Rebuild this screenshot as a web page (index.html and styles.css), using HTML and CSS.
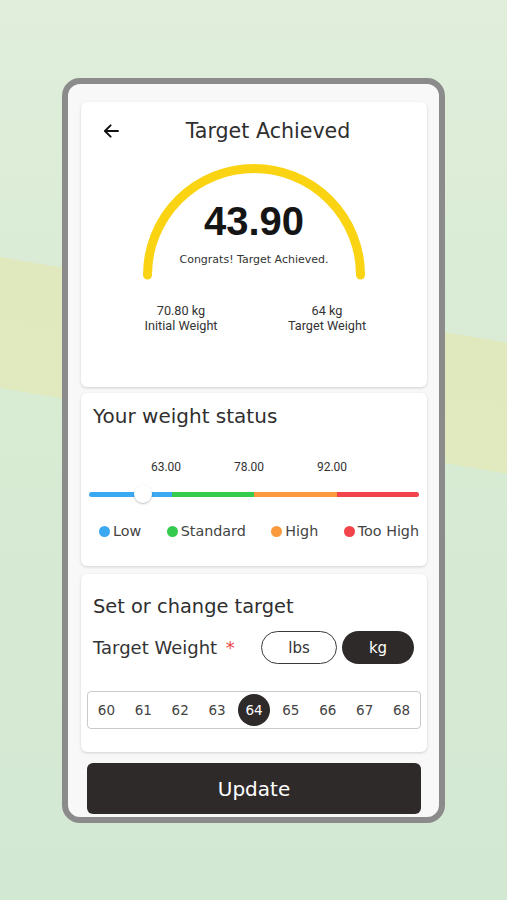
FILE: index.html
```html
<!DOCTYPE html>
<html lang="en">
<head>
<meta charset="utf-8">
<title>Target Achieved</title>
<link rel="stylesheet" href="styles.css">
</head>
<body>
<div class="page">
  <div class="phone">
    <section class="card card-summary">
      <header class="head">
        <span class="back">
          <svg width="16" height="14" viewBox="0 0 16 14" aria-hidden="true">
            <path d="M15 7H2.2M7.6 1.3L1.9 7l5.7 5.7" fill="none" stroke="#111" stroke-width="1.9" stroke-linecap="round" stroke-linejoin="round"/>
          </svg>
        </span>
        <h1 class="title">Target Achieved</h1>
      </header>
      <div class="gauge">
        <svg class="gauge-arc" width="230" height="122" viewBox="0 0 230 122" aria-hidden="true">
          <path d="M8.5 115 A106.5 106.5 0 0 1 221.5 115" fill="none" stroke="#fad312" stroke-width="9" stroke-linecap="round"/>
        </svg>
        <div class="gauge-text">
          <div class="value">43.90</div>
          <div class="congrats">Congrats! Target Achieved.</div>
        </div>
      </div>
      <div class="stats">
        <div class="stat"><div>70.80 kg</div><div>Initial Weight</div></div>
        <div class="stat"><div>64 kg</div><div>Target Weight</div></div>
      </div>
    </section>

    <section class="card card-status">
      <h2 class="section-title">Your weight status</h2>
      <div class="marks">
        <span>63.00</span><span>78.00</span><span>92.00</span>
      </div>
      <div class="slider">
        <div class="bar">
          <span class="seg seg-low"></span><span class="seg seg-std"></span><span class="seg seg-high"></span><span class="seg seg-top"></span>
        </div>
        <span class="thumb"></span>
      </div>
      <ul class="legend">
        <li><i class="dot dot-low"></i>Low</li>
        <li><i class="dot dot-std"></i>Standard</li>
        <li><i class="dot dot-high"></i>High</li>
        <li><i class="dot dot-top"></i>Too High</li>
      </ul>
    </section>

    <section class="card card-target">
      <h2 class="section-title title-target">Set or change target</h2>
      <div class="unit-row">
        <span class="field-label">Target Weight <b class="req">*</b></span>
        <div class="units">
          <span class="pill">lbs</span>
          <span class="pill pill-on">kg</span>
        </div>
      </div>
      <div class="picker">
        <span>60</span><span>61</span><span>62</span><span>63</span><span class="sel"><em>64</em></span><span>65</span><span>66</span><span>67</span><span>68</span>
      </div>
    </section>

    <button class="update">Update</button>
  </div>
</div>
</body>
</html>
```
FILE: styles.css
```css
* { box-sizing: border-box; }
html, body { margin: 0; padding: 0; }
body {
  width: 507px;
  height: 900px;
  overflow: hidden;
  font-family: "DejaVu Sans", "Noto Sans", sans-serif;
  color: #2e2e2e;
}
.page {
  width: 507px;
  height: 900px;
  padding: 78px 0 0 62px;
  background:
    linear-gradient(189.6deg, rgba(0,0,0,0) 0, rgba(0,0,0,0) 338px, #dfe9bd 338px, #e1eabe 467px, rgba(0,0,0,0) 467px),
    linear-gradient(180deg, #e0eedb 0%, #d8ebd3 45%, #d3e8d3 100%);
}
.phone {
  width: 383px;
  height: 745px;
  border: 6px solid #8b8b8b;
  border-radius: 18px;
  background: #f8f8f8;
  padding: 18px 12px 0 13px;
  display: flex;
  flex-direction: column;
}
.card {
  background: #fff;
  border-radius: 6px;
  box-shadow: 0 1px 3px rgba(0,0,0,0.16);
}
.card-summary {
  height: 285px;
  padding-top: 14px;
  display: flex;
  flex-direction: column;
  align-items: stretch;
}
.head {
  display: flex;
  align-items: center;
  height: 30px;
  padding: 0 10px 0 22px;
}
.back { width: 16px; height: 14px; display: flex; }
.title {
  flex: 1;
  margin: 0;
  text-align: center;
  font-weight: normal;
  font-size: 20.6px;
  line-height: 30px;
  color: #2f2f2f;
}
.gauge {
  margin-top: 14px;
  display: grid;
  justify-items: center;
}
.gauge-arc, .gauge-text { grid-area: 1 / 1; }
.gauge-text {
  width: 230px;
  height: 122px;
  display: flex;
  flex-direction: column;
  align-items: center;
  padding-top: 39px;
}
.value {
  font-family: "Liberation Sans", Arial, sans-serif;
  font-weight: bold;
  font-size: 40px;
  line-height: 44px;
  color: #151515;
}
.congrats {
  margin-top: 10px;
  font-size: 11px;
  line-height: 14px;
  color: #333;
}
.stats {
  margin-top: 21px;
  display: flex;
  justify-content: center;
  gap: 26px;
  padding-left: 0;
}
.stat {
  width: 120px;
  text-align: center;
  font-family: Roboto, "Liberation Sans", sans-serif;
  font-size: 12.7px;
  line-height: 15px;
  color: #333;
}
.card-status {
  margin-top: 6px;
  height: 173px;
  padding: 10px 8px 0 8px;
}
.section-title {
  margin: 0;
  padding-left: 4px;
  font-weight: normal;
  font-size: 20px;
  line-height: 26px;
  color: #2f2f2f;
}
.marks {
  margin-top: 31px;
  display: flex;
  gap: 43px;
  padding-left: 57px;
  font-family: Roboto, "Liberation Sans", sans-serif;
  font-size: 12px;
  line-height: 14px;
  color: #333;
}
.marks span { width: 40px; text-align: center; }
.slider {
  position: relative;
  margin-top: 10px;
  height: 20px;
  display: flex;
  align-items: center;
}
.bar {
  width: 330px;
  height: 5px;
  display: flex;
  border-radius: 3px;
  overflow: hidden;
}
.seg { flex: 1; }
.seg-low { background: #3aa9f2; }
.seg-std { background: #35cb4e; }
.seg-high { background: #fa9a3c; }
.seg-top { background: #f3434b; }
.thumb {
  position: absolute;
  left: 45px;
  top: 1px;
  width: 18px;
  height: 18px;
  border-radius: 50%;
  background: #fff;
  box-shadow: 0 1px 2px rgba(0,0,0,0.25);
}
.legend {
  list-style: none;
  margin: 17px 0 0;
  padding: 0 0 0 10px;
  display: flex;
  justify-content: space-between;
  font-size: 14.3px;
  line-height: 20px;
  color: #444;
}
.legend li { display: flex; align-items: center; }
.dot {
  width: 11px;
  height: 11px;
  border-radius: 50%;
  margin-right: 3px;
}
.dot-low { background: #3aa9f2; }
.dot-std { background: #35cb4e; }
.dot-high { background: #fa9a3c; }
.dot-top { background: #f3434b; }
.card-target {
  margin-top: 8px;
  height: 178px;
  padding: 20px 6px 0 6px;
}
.title-target { padding-left: 6px; font-size: 19.4px; }
.unit-row {
  margin-top: 11px;
  height: 33px;
  display: flex;
  align-items: center;
  justify-content: space-between;
  padding: 0 7px 0 6px;
}
.field-label {
  font-size: 18px;
  line-height: 24px;
  color: #333;
}
.req { color: #ec4a4a; font-weight: normal; margin-left: 3px; }
.units { display: flex; gap: 5px; }
.pill {
  height: 33px;
  border-radius: 17px;
  display: flex;
  align-items: center;
  justify-content: center;
  font-size: 15px;
  color: #333;
}
.pill:first-child { width: 76px; border: 1.5px solid #3a3a3a; background: #fff; }
.pill-on { width: 72px; background: #2f2a2a; color: #fff; }
.picker {
  margin-top: 27px;
  height: 38px;
  border: 1px solid #c9c9c9;
  border-radius: 4px;
  display: grid;
  grid-template-columns: repeat(9, 1fr);
  align-items: center;
  font-size: 13.5px;
  color: #444;
}
.picker span { display: flex; justify-content: center; }
.picker .sel em {
  font-style: normal;
  width: 32px;
  height: 32px;
  border-radius: 50%;
  background: #2f2a2a;
  color: #fff;
  display: flex;
  align-items: center;
  justify-content: center;
}
.update {
  margin: 11px 6px 0 6px;
  height: 51px;
  border: 0;
  border-radius: 6px;
  background: #2f2a2a;
  color: #fff;
  font-family: "DejaVu Sans", sans-serif;
  font-size: 20px;
  padding: 0;
}
```
